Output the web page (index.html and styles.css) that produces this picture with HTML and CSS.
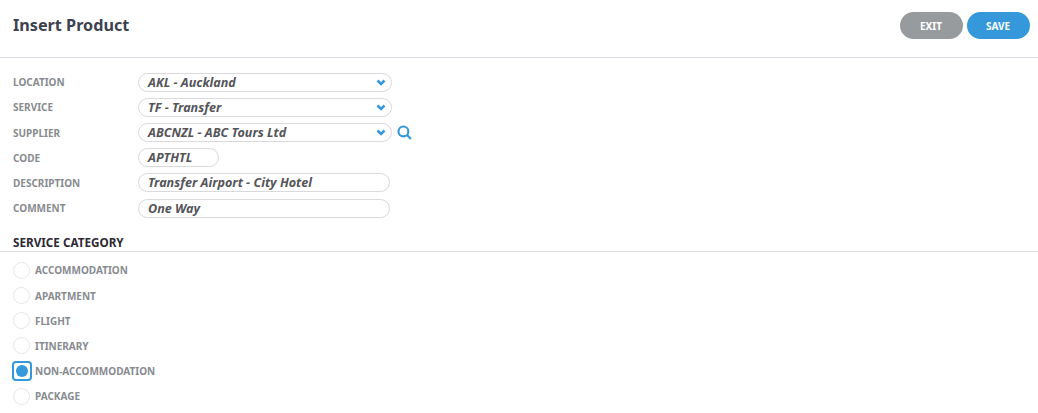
FILE: index.html
```html
<!DOCTYPE html>
<html lang="en">
<head>
    <meta charset="UTF-8">
    <title>Insert Product</title>
    <link rel="stylesheet" href="styles.css">
</head>
<body>
    <header class="page-header">
        <h1>Insert Product</h1>
        <div class="actions">
            <button class="btn btn-exit">EXIT</button>
            <button class="btn btn-save">SAVE</button>
        </div>
    </header>

    <form class="product-form">
        <div class="row">
            <label>LOCATION</label>
            <div class="field field-select">
                <span>AKL - Auckland</span>
                <svg class="chevron" viewBox="0 0 10 7"><path d="M1.5 1.5 5 5l3.5-3.5"/></svg>
            </div>
        </div>
        <div class="row">
            <label>SERVICE</label>
            <div class="field field-select">
                <span>TF - Transfer</span>
                <svg class="chevron" viewBox="0 0 10 7"><path d="M1.5 1.5 5 5l3.5-3.5"/></svg>
            </div>
        </div>
        <div class="row">
            <label>SUPPLIER</label>
            <div class="field field-select">
                <span>ABCNZL - ABC Tours Ltd</span>
                <svg class="chevron" viewBox="0 0 10 7"><path d="M1.5 1.5 5 5l3.5-3.5"/></svg>
            </div>
            <svg class="search" viewBox="0 0 14 14"><circle cx="6" cy="6" r="4.6"/><path d="M9.4 9.4 13 13"/></svg>
        </div>
        <div class="row">
            <label>CODE</label>
            <div class="field field-code"><span>APTHTL</span></div>
        </div>
        <div class="row">
            <label>DESCRIPTION</label>
            <div class="field field-text"><span>Transfer Airport - City Hotel</span></div>
        </div>
        <div class="row">
            <label>COMMENT</label>
            <div class="field field-text"><span>One Way</span></div>
        </div>
    </form>

    <h2 class="section-title">SERVICE CATEGORY</h2>

    <div class="radio-list">
        <div class="radio-row"><span class="radio"></span>ACCOMMODATION</div>
        <div class="radio-row"><span class="radio"></span>APARTMENT</div>
        <div class="radio-row"><span class="radio"></span>FLIGHT</div>
        <div class="radio-row"><span class="radio"></span>ITINERARY</div>
        <div class="radio-row"><span class="radio checked"></span>NON-ACCOMMODATION</div>
        <div class="radio-row"><span class="radio"></span>PACKAGE</div>
    </div>
</body>
</html>
```

FILE: styles.css
```css
html, body {
    margin: 0;
    padding: 0;
    height: 413px;
    overflow: hidden;
    background: #fff;
    font-family: "Noto Sans", "Open Sans", sans-serif;
}

/* Header */
.page-header {
    display: flex;
    justify-content: space-between;
    align-items: flex-start;
    height: 45px;
    padding: 12px 8px 0 13px;
    border-bottom: 1px solid #dddde3;
}

h1 {
    margin: 0;
    font-size: 16.2px;
    line-height: 27px;
    font-weight: 700;
    color: #3d4250;
}

.actions {
    display: flex;
    gap: 4px;
}

.btn {
    width: 63px;
    height: 27px;
    border: none;
    border-radius: 14px;
    padding: 0 1px 0 0;
    font-family: inherit;
    font-size: 10px;
    font-weight: 700;
    color: #fff;
}

.btn-exit { background: #989b9e; }
.btn-save { background: #3498db; }

/* Form */
.product-form {
    padding: 11.6px 0 0 13px;
}

.row {
    display: flex;
    align-items: center;
    height: 25.2px;
}

.row label {
    width: 125px;
    font-size: 10px;
    font-weight: 700;
    color: #888b90;
}

.field {
    box-sizing: border-box;
    display: flex;
    align-items: center;
    justify-content: space-between;
    height: 19px;
    padding: 0 5px 0 9px;
    border: 1px solid #d9d9de;
    border-radius: 10px;
    font-size: 12.6px;
    font-style: italic;
    font-weight: 700;
    color: #55555a;
}

.field-select { width: 254px; }
.field-code { width: 81px; }
.field-text { width: 252px; }

.chevron {
    width: 10px;
    height: 7px;
    fill: none;
    stroke: #3498db;
    stroke-width: 2.6;
}

.search {
    width: 15px;
    height: 15px;
    margin-left: 5px;
    fill: none;
    stroke: #3498db;
    stroke-width: 2;
}

/* Service category */
.section-title {
    margin: 0;
    padding: 13px 0 0 13px;
    height: 17.4px;
    font-size: 11.7px;
    line-height: 16px;
    font-weight: 700;
    color: #2e2a33;
    border-bottom: 1px solid #dddde3;
}

.radio-list {
    padding-top: 5.7px;
}

.radio-row {
    display: flex;
    align-items: center;
    height: 25.2px;
    padding-left: 13px;
    font-size: 10px;
    font-weight: 700;
    color: #888b90;
}

.radio {
    box-sizing: border-box;
    width: 17px;
    height: 17px;
    margin-right: 5px;
    border: 1px solid #e6e6e9;
    border-radius: 50%;
}

/* focused radio: rounded square ring round a dot */
.radio.checked {
    display: flex;
    align-items: center;
    justify-content: center;
    width: 20px;
    height: 20px;
    margin: 0 3px 0 -1px;
    border: 2px solid #3498db;
    border-radius: 4px;
}

.radio.checked::after {
    content: "";
    width: 12px;
    height: 12px;
    border-radius: 50%;
    background: #3498db;
}
```
